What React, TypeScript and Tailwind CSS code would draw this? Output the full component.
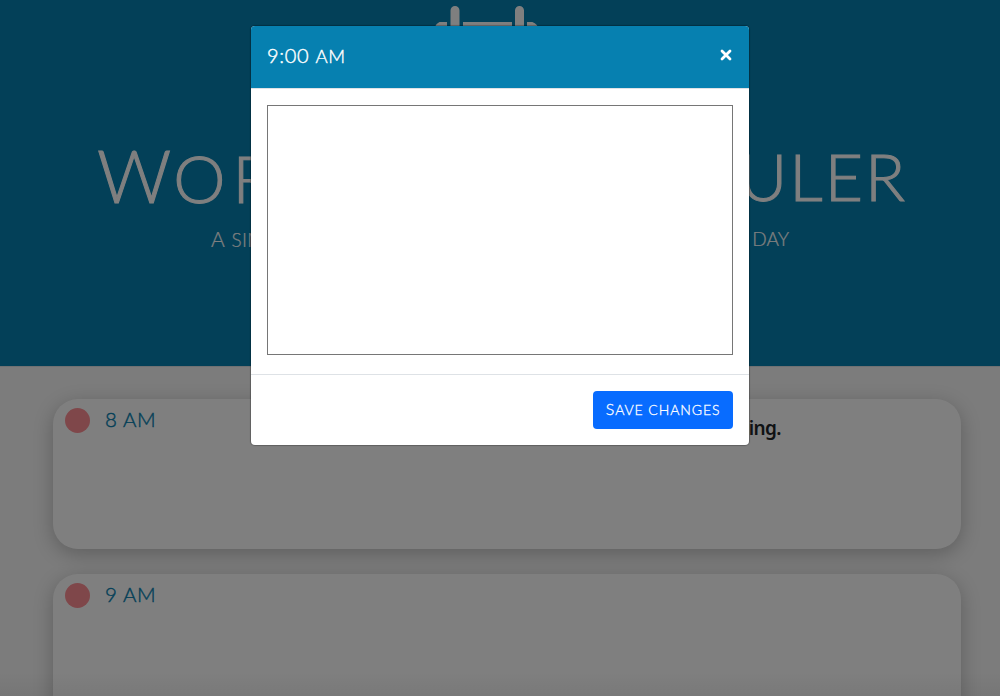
import React from "react";

const hours = ["8 AM", "9 AM"];

function Calendar() {
  return (
    <svg className="h-[104px] w-[104px]" viewBox="0 0 104 104" fill="none" stroke="white">
      <path d="M20 4.5V27M84.500 4.5V27" strokeWidth="9" strokeLinecap="round" />
      <path d="M28 18h49M12 18H5Q1 20 1 27v70h102V27q-1-7-6-9h-5" strokeWidth="4" />
    </svg>
  );
}

export default function App() {
  return (
    <div className="relative h-[696px] w-[1000px] overflow-hidden bg-[#f8f8f8] font-['Lato',sans-serif] font-light">
      <header className="flex h-[367px] flex-col items-center border-b border-[#dee2e6] bg-[#0680b0] pt-[6px] text-white">
        <div className="h-[132px] pr-[26px]">
          <Calendar />
        </div>
        <h1 className="flex h-[83px] w-[806px] justify-between whitespace-nowrap text-[66px] leading-[74px] [-webkit-text-stroke:1px_white]">
          <span className="tracking-[2px]">
            <span className="text-[73px]">W</span>
            <span className="tracking-[7px]">O</span>RK
          </span>
          <span className="text-[40px]">DAY</span>
          <span className="-mr-[4px] pt-px tracking-[2px]">ULER</span>
        </h1>
        <p className="flex w-[578px] justify-between text-[19px] leading-[36px] [-webkit-text-stroke:0.2px_white]">
          <span className="tracking-[0.3px]"><span className="mr-px text-[21px]">A</span> SIMPLE CALENDAR APP</span>
          <span>FOR SCHEDULING YOUR WORK DAY</span>
        </p>
      </header>
      <main className="flex flex-col gap-[25px] pl-[53px] pt-[32px]">
        {hours.map((hour, i) => (
          <section
            key={hour}
            className="flex h-[150px] w-[908px] shrink-0 items-start rounded-[25px] bg-white pl-3 pt-[9px] shadow-[0_5px_20px_rgba(0,0,0,0.24)]"
          >
            <i className="h-[25px] w-[25px] rounded-full bg-[#ff8f95]" />
            <span className="ml-[15px] text-[20.5px] leading-[23px] tracking-[0.6px] text-[#0680b0] [-webkit-text-stroke:0.4px_#0680b0]">
              {hour}
            </span>
            {i === 0 && (
              <strong className="ml-auto mr-[180px] mt-[7px] font-['Noto_Sans',sans-serif] text-[19px] font-semibold leading-[27px] tracking-[-0.6px] text-[#212529]">
                Good morning.
              </strong>
            )}
          </section>
        ))}
      </main>
      <div className="absolute inset-0 flex items-start bg-black/50 pl-[251px] pt-[26px]">
        <div className="flex h-[419px] w-[498px] flex-col overflow-hidden rounded-[4px] bg-white shadow-[0_0_1px_1px_rgba(0,0,0,0.25)]">
          <div className="flex h-[63px] items-center justify-between border-b border-[#dee2e6] bg-[#0680b0] px-4 text-white">
            <h2 className="pb-[3px] text-[20px] font-light leading-6 tracking-[0.7px] [-webkit-text-stroke:0.4px_white]">
              9:00 <span className="text-[18.5px]">AM</span>
            </h2>
            <button aria-label="Close" className="mb-[5px] mr-px">
              <svg className="h-3 w-3" viewBox="0 0 12 12" stroke="white" strokeWidth="2.8" strokeLinecap="round">
                <path d="M2 2l8 8M10 2l-8 8" />
              </svg>
            </button>
          </div>
          <div className="h-[285px] px-4 pt-[16px]">
            <textarea className="block h-[250px] w-full resize-none border border-[#767676]" />
          </div>
          <div className="flex flex-1 justify-end border-t border-[#dee2e6] px-4 pt-4">
            <button className="h-[38px] w-[140px] whitespace-nowrap rounded-[4px] bg-[#086cff] pb-[3px] text-[14px] font-light tracking-[0.9px] text-white [-webkit-text-stroke:0.3px_white]">
              <span className="text-[16px]">S</span>AVE CHANGES
            </button>
          </div>
        </div>
      </div>
      <div className="pointer-events-none absolute inset-x-0 bottom-0 h-6 bg-gradient-to-b from-transparent to-black/5" />
    </div>
  );
}
